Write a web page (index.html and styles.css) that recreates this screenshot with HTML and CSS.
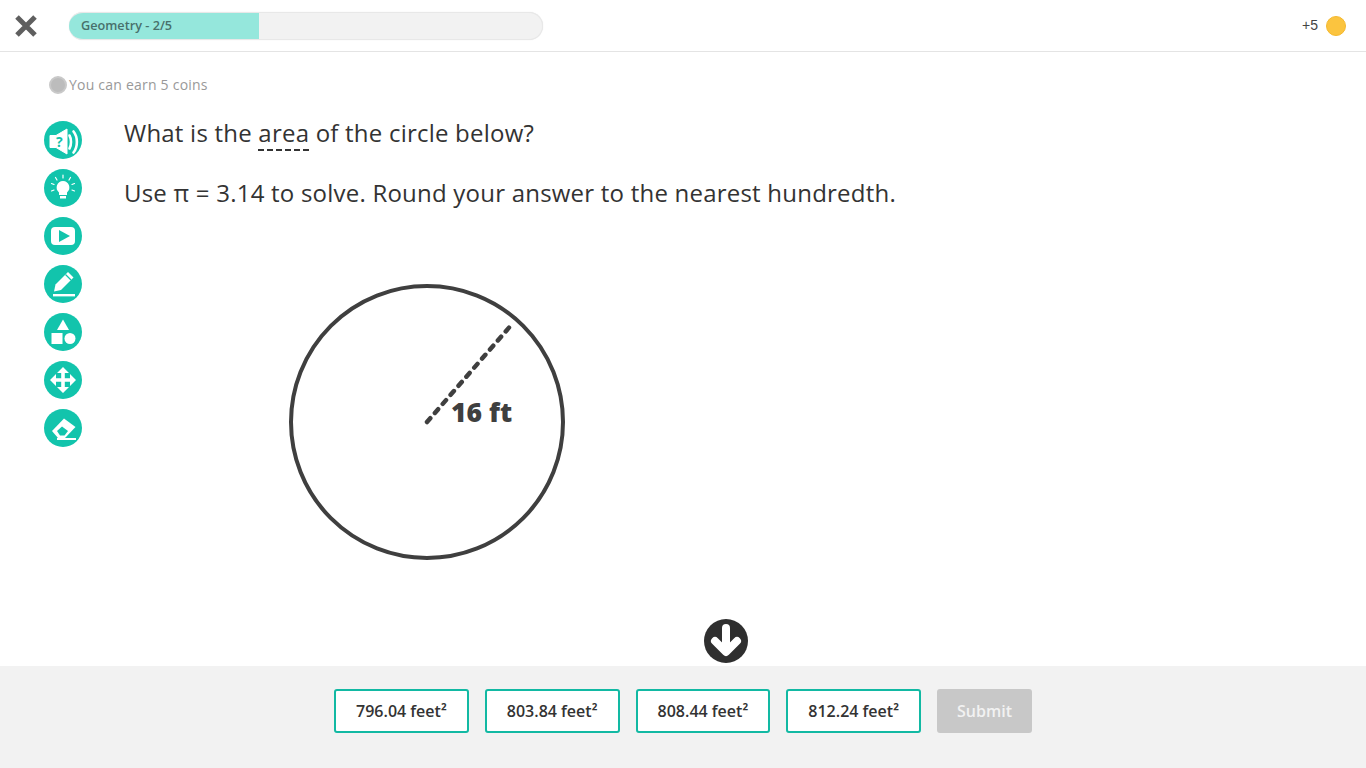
FILE: index.html
```html
<!DOCTYPE html>
<html lang="en">
  <head>
    <meta charset="UTF-8" />
    <title>Geometry practice</title>
    <link rel="stylesheet" href="styles.css">
  </head>
  <body>
    <header class="topbar">
      <svg class="close-icon" width="24" height="24" viewBox="0 0 24 24">
        <path d="M3 3 L21 21 M21 3 L3 21" stroke="#5f5f5f" stroke-width="5" />
      </svg>
      <div class="progress">
        <div class="progress-fill">Geometry - 2/5</div>
      </div>
      <div class="coins">
        <span class="coins-count">+5</span>
        <span class="coin"></span>
      </div>
    </header>

    <main class="content">
      <div class="earn">
        <span class="earn-coin"></span>
        <span>You can earn 5 coins</span>
      </div>

      <div class="question-row">
        <nav class="tools">
          <button class="tool">
            <svg viewBox="0 0 38 38" width="38" height="38">
              <path d="M6 14.5 H12 L23 8 V33 L12 26.5 H6 Z" fill="#fff" stroke="#fff" stroke-linejoin="round" />
              <path d="M25.5 14.5 C27.5 18 27.5 24 25.5 27.5 M29.5 10.5 C34 16 34 26 29.5 31.5" fill="none" stroke="#fff" stroke-width="2.6" stroke-linecap="round" />
              <text x="12" y="26" class="tool-q">?</text>
            </svg>
          </button>
          <button class="tool">
            <svg viewBox="0 0 38 38" width="38" height="38">
              <path d="M19 12 A6.5 6.5 0 0 1 23 23.5 V26 H15 V23.5 A6.5 6.5 0 0 1 19 12 Z" fill="#fff" />
              <rect x="16" y="27" width="6" height="2.5" fill="#fff" />
              <path d="M19 6 V9 M11.5 8.5 L13 11 M26.5 8.5 L25 11 M7.5 14.5 L10 15.5 M30.5 14.5 L28 15.5 M7.5 22 L10 21 M30.5 22 L28 21" stroke="#fff" stroke-width="1.2" stroke-linecap="round" />
            </svg>
          </button>
          <button class="tool">
            <svg viewBox="0 0 38 38" width="38" height="38">
              <rect x="7" y="10" width="24" height="18" rx="4" fill="#fff" />
              <path d="M15 13 L26 19 L15 25 Z" fill="#12c4ac" />
            </svg>
          </button>
          <button class="tool">
            <svg viewBox="0 0 38 38" width="38" height="38">
              <path d="M11.5 19.5 L24 7 L29.5 12.5 L17 25 L10 26.5 Z" fill="#fff" />
              <path d="M21.5 9.5 L27 15" stroke="#12c4ac" stroke-width="1.2" />
              <rect x="9" y="29" width="22" height="2.4" fill="#fff" />
            </svg>
          </button>
          <button class="tool">
            <svg viewBox="0 0 38 38" width="38" height="38">
              <path d="M19 6.5 L25 17 H13 Z" fill="#fff" />
              <rect x="7.5" y="20" width="11" height="11" fill="#fff" />
              <circle cx="26" cy="25.5" r="5.5" fill="#fff" />
            </svg>
          </button>
          <button class="tool">
            <svg viewBox="0 0 38 38" width="38" height="38">
              <path d="M19 6 L25 12 H20.8 V17.2 H26 V13 L32 19 L26 25 V20.8 H20.8 V26 H25 L19 32 L13 26 H17.2 V20.8 H12 V25 L6 19 L12 13 V17.2 H17.2 V12 H13 Z" fill="#fff" />
            </svg>
          </button>
          <button class="tool">
            <svg viewBox="0 0 38 38" width="38" height="38">
              <path d="M8 22 L20 9.5 L31.5 18 L21 29 H14 Z" fill="#fff" />
              <path d="M13 22 L18 17.5 L24 22 L20.5 26.5 H16 Z" fill="#12c4ac" />
              <rect x="13" y="29" width="19" height="2" fill="#fff" />
            </svg>
          </button>
        </nav>

        <section class="question">
          <p>What is the <span class="term">area</span> of the circle below?</p>
          <p>Use π = 3.14 to solve. Round your answer to the nearest hundredth.</p>
          <svg class="figure" width="280" height="280" viewBox="0 0 280 280">
            <circle cx="140" cy="140" r="136" fill="none" stroke="#3f3f3f" stroke-width="4" />
            <line x1="140" y1="140" x2="226" y2="41" stroke="#3f3f3f" stroke-width="4.5" stroke-dasharray="5 7" stroke-linecap="round" />
            <text x="164" y="140" class="figure-label">16 ft</text>
          </svg>
        </section>
      </div>

      <div class="scroll-down">
        <svg width="44" height="44" viewBox="0 0 44 44">
          <path d="M22 9 V30 M11 22 L22 33 L33 22" fill="none" stroke="#fff" stroke-width="8" stroke-linecap="round" stroke-linejoin="round" />
        </svg>
      </div>
    </main>

    <footer class="answers">
      <button class="answer">796.04 feet²</button>
      <button class="answer">803.84 feet²</button>
      <button class="answer">808.44 feet²</button>
      <button class="answer">812.24 feet²</button>
      <button class="submit">Submit</button>
    </footer>
  </body>
</html>
```

FILE: styles.css
```css
* {
  margin: 0;
  padding: 0;
  box-sizing: border-box;
}

body {
  height: 768px;
  display: flex;
  flex-direction: column;
  overflow: hidden;
  font-family: "Open Sans", sans-serif;
  color: #333;
  background: #fff;
}

.topbar {
  height: 52px;
  flex-shrink: 0;
  display: flex;
  align-items: center;
  padding: 0 20px 0 14px;
  border-bottom: 1px solid #e4e4e4;
}

.close-icon {
  margin-right: 31px;
}

.progress {
  width: 474px;
  height: 28px;
  border-radius: 14px;
  overflow: hidden;
  background: #f2f2f2;
  border: 1px solid #e8e8e8;
  border-left: none;
  box-shadow: 0 0 1px #ddd;
}

.progress-fill {
  width: 190px;
  height: 28px;
  margin-top: -1px;
  padding-left: 12px;
  background: #95e7dc;
  color: #48706b;
  font-size: 12.7px;
  font-weight: 600;
  line-height: 26px;
}

.coins {
  margin-left: auto;
  display: flex;
  align-items: center;
  gap: 7px;
  font-family: "Liberation Sans", sans-serif;
  font-size: 14px;
  color: #444;
}

.coins-count {
  margin: -2px 1px 0 -1px;
}

.coin {
  width: 20px;
  height: 20px;
  border-radius: 50%;
  background: #fbc43f;
  border: 1px solid #f5b92e;
}

.content {
  flex: 1;
  position: relative;
}

.earn {
  display: flex;
  align-items: center;
  gap: 2px;
  padding: 9px 0 0 49px;
  height: 55px;
  font-size: 14px;
  letter-spacing: 0.22px;
  color: #999;
}

.earn-coin {
  width: 18px;
  height: 18px;
  margin-top: 2px;
  border-radius: 50%;
  background: #bcbcbc;
  border: 2px solid #c9c9c9;
}

.question-row {
  display: flex;
  padding: 14px 0 0 44px;
}

.tools {
  width: 38px;
  margin-right: 42px;
  display: flex;
  flex-direction: column;
  gap: 10px;
}

.tool {
  width: 38px;
  height: 38px;
  display: block;
  border: none;
  border-radius: 50%;
  background: #12c4ac;
}

.tool svg {
  display: block;
}

.tool-q {
  font-family: "Open Sans", sans-serif;
  font-size: 14px;
  font-weight: 700;
  fill: #12c4ac;
}

.question {
  margin-top: -5px;
}

.question p {
  height: 60px;
  font-size: 24px;
  line-height: 33px;
  letter-spacing: 0.22px;
  color: #333;
}

.term {
  border-bottom: 2px dashed #333;
}

.figure {
  display: block;
  margin: 46px 0 0 163px;
}

.figure-label {
  font-family: "Open Sans", sans-serif;
  font-size: 26.5px;
  font-weight: 800;
  fill: #3f3f3f;
}

.scroll-down {
  position: absolute;
  left: 704px;
  top: 567px;
  width: 44px;
  height: 44px;
  border-radius: 50%;
  background: #2f2f2f;
}

.scroll-down svg {
  display: block;
}

.answers {
  height: 102px;
  flex-shrink: 0;
  display: flex;
  justify-content: center;
  align-items: flex-start;
  gap: 16px;
  padding-top: 23px;
  background: #f2f2f2;
}

.answer {
  width: 134.75px;
  height: 44px;
  border: 2px solid #12b9a3;
  border-radius: 3px;
  background: #fff;
  font-family: "Open Sans", sans-serif;
  font-size: 16px;
  font-weight: 600;
  color: #333;
}

.submit {
  width: 95px;
  height: 44px;
  border: none;
  border-radius: 3px;
  background: #c8c8c8;
  font-family: "Open Sans", sans-serif;
  font-size: 16px;
  font-weight: 600;
  color: #f2f2f2;
}
```
